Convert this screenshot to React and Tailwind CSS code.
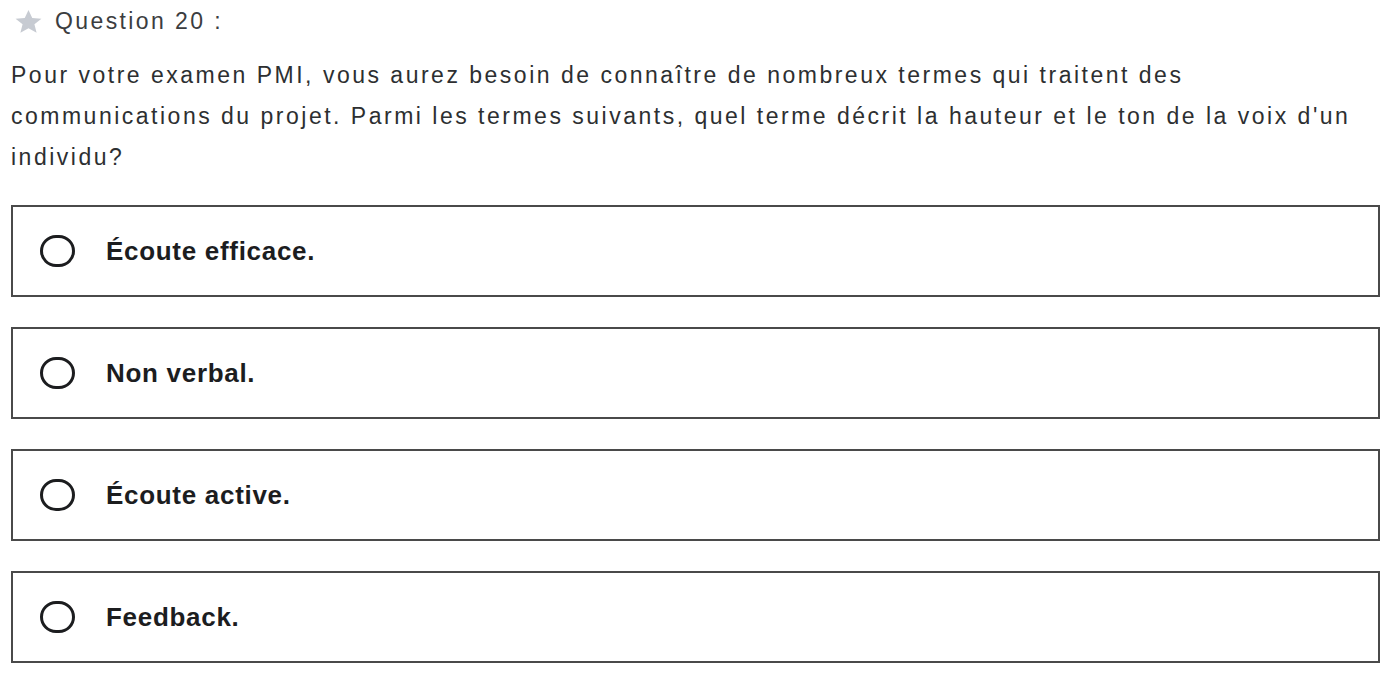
import React from "react"

const options = ["Écoute efficace.", "Non verbal.", "Écoute active.", "Feedback."]

function Star() {
  return (
    <svg viewBox="0 0 24 24" className="w-[29px] h-[27px]" preserveAspectRatio="none">
      <path d="M12 1.8l3.1 7 7.6.7-5.8 5 1.8 7.5L12 18.1 5.3 22l1.8-7.5-5.8-5 7.6-.7z" fill="#c7cbd2" />
    </svg>
  )
}

export default function App() {
  return (
    <div className="w-[1400px] h-[690px] bg-white text-[#2d2f31] font-['Liberation_Sans',Arial,sans-serif] px-[11px] pt-[6px]">
      <div className="flex items-center gap-[12px] pl-[3px] h-[30px]">
        <Star />
        <span className="text-[23px] tracking-[2.4px] text-[#3b3d40]">Question 20 :</span>
      </div>

      <p className="mt-[19px] w-[1372px] text-[23px] leading-[41px] tracking-[2.5px]">
        Pour votre examen PMI, vous aurez besoin de connaître de nombreux termes qui traitent des communications du projet. Parmi les termes suivants, quel terme décrit la hauteur et le ton de la voix d'un individu?
      </p>

      <div className="mt-[27px] flex flex-col gap-[30px] w-[1369px]">
        {options.map((opt, i) => (
          <label key={i} className="flex items-center h-[92px] border-2 border-[#4a4a4a] pl-[27px]">
            <span className="w-[35px] h-[32px] rounded-full border-[3px] border-[#1c1d1f] shrink-0" />
            <span className="ml-[31px] text-[26px] font-bold tracking-[0.7px] text-[#1c1d1f]">{opt}</span>
          </label>
        ))}
      </div>
    </div>
  )
}
